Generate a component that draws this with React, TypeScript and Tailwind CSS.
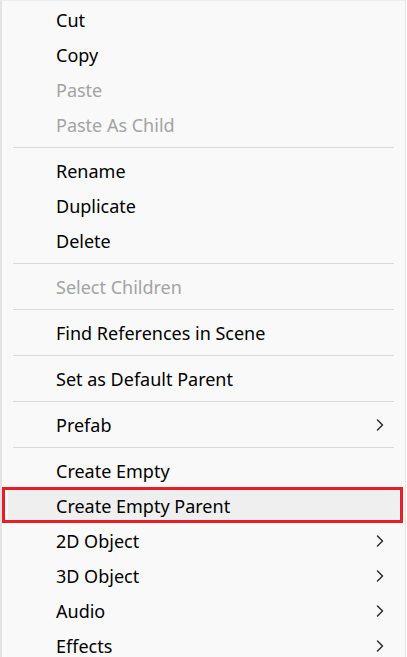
import { ChevronRight } from 'lucide-react';

type Item =
  | { kind: 'item'; label: string; disabled?: boolean; sub?: boolean; selected?: boolean }
  | { kind: 'sep' };

const items: Item[] = [
  { kind: 'item', label: 'Cut' },
  { kind: 'item', label: 'Copy' },
  { kind: 'item', label: 'Paste', disabled: true },
  { kind: 'item', label: 'Paste As Child', disabled: true },
  { kind: 'sep' },
  { kind: 'item', label: 'Rename' },
  { kind: 'item', label: 'Duplicate' },
  { kind: 'item', label: 'Delete' },
  { kind: 'sep' },
  { kind: 'item', label: 'Select Children', disabled: true },
  { kind: 'sep' },
  { kind: 'item', label: 'Find References in Scene' },
  { kind: 'sep' },
  { kind: 'item', label: 'Set as Default Parent' },
  { kind: 'sep' },
  { kind: 'item', label: 'Prefab', sub: true },
  { kind: 'sep' },
  { kind: 'item', label: 'Create Empty' },
  { kind: 'item', label: 'Create Empty Parent', selected: true },
  { kind: 'item', label: '2D Object', sub: true },
  { kind: 'item', label: '3D Object', sub: true },
  { kind: 'item', label: 'Audio', sub: true },
  { kind: 'item', label: 'Effects', sub: true },
];

function MenuRow({ label, disabled, sub, selected }: { label: string; disabled?: boolean; sub?: boolean; selected?: boolean }) {
  return (
    <div className="relative h-[35px] shrink-0 px-[6px]">
      <div
        className={
          'flex h-full items-center pl-[48px] pr-[9px] ' +
          (selected ? 'bg-[#efefef]' : '') +
          (disabled ? ' text-[#a3a3a3]' : ' text-black')
        }
      >
        <span className="flex-1 leading-none">{label}</span>
        {sub && <ChevronRight className="h-5 w-5 text-[#2b2b2b]" strokeWidth={1.8} />}
      </div>
      {selected && (
        <div className="pointer-events-none absolute -top-[1px] bottom-0 left-0 right-[2px] border-[3.5px] border-[#e81d25]" />
      )}
    </div>
  );
}

export default function App() {
  return (
    <div className="h-[657px] w-[407px] overflow-hidden bg-white">
      <div
        className="flex h-full w-[406px] flex-col border-l-2 border-r border-t border-l-[#e3e3e3] border-r-[#e6e6e6] border-t-[#ececec] bg-[#f9f9f9] pt-[1px] text-[18px]"
        style={{ fontFamily: '"Noto Sans", "Open Sans", sans-serif' }}
      >
        {items.map((it, i) =>
          it.kind === 'sep' ? (
            <div key={i} className="flex h-[11px] shrink-0 items-center px-[11px]">
              <div className="h-px w-full bg-[#d9d9d9]" />
            </div>
          ) : (
            <MenuRow key={i} label={it.label} disabled={it.disabled} sub={it.sub} selected={it.selected} />
          ),
        )}
      </div>
    </div>
  );
}
